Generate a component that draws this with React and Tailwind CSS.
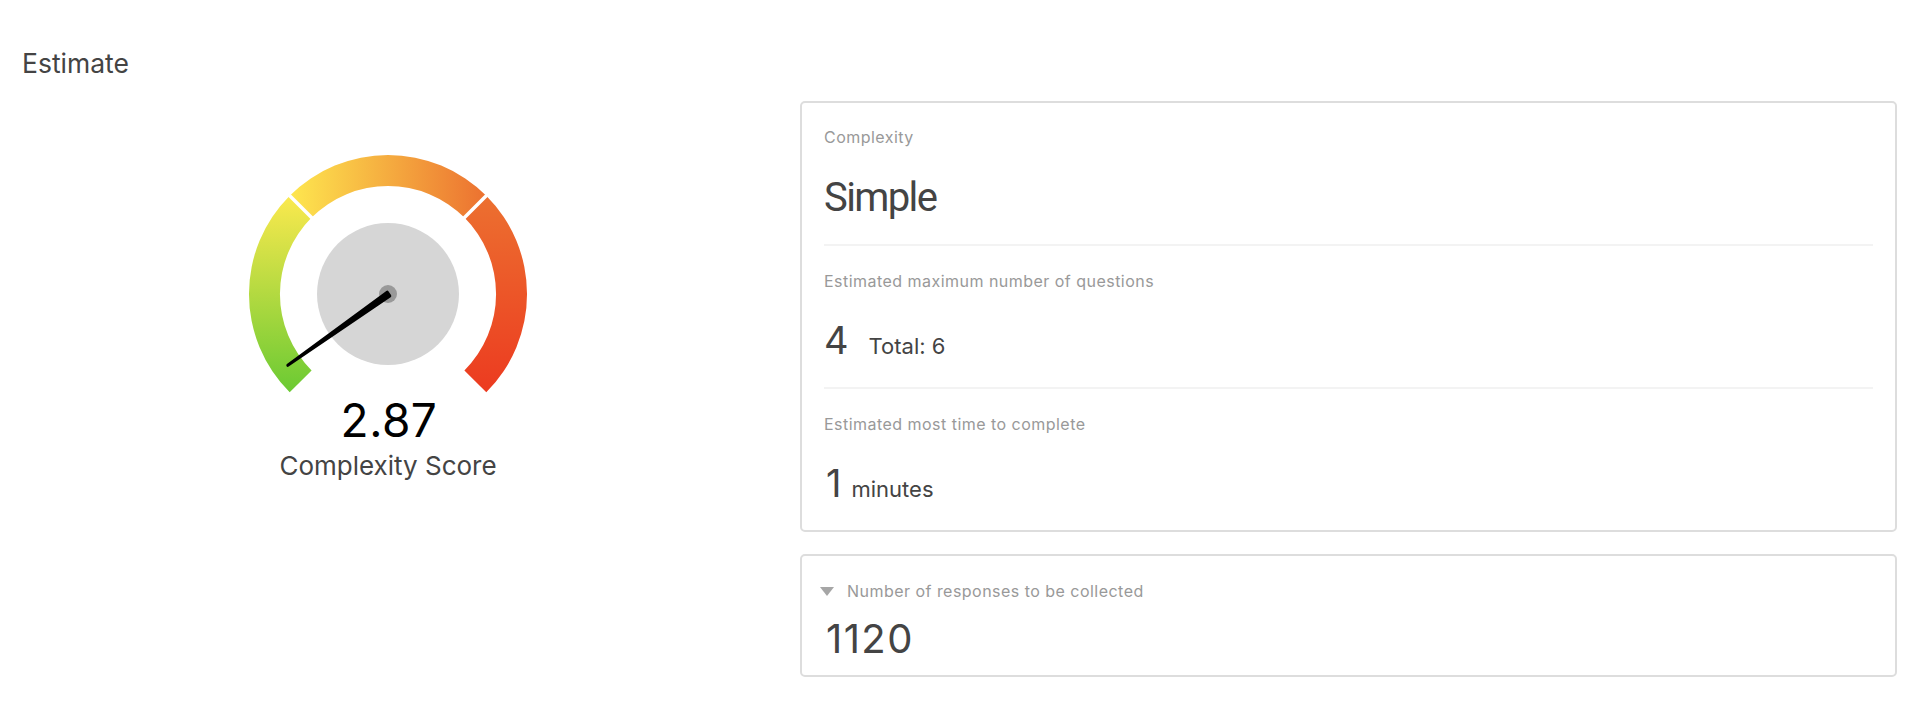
const Gauge = () => (
    <svg width="280" height="240" viewBox="0 0 280 240" className="block">
        <defs>
            <linearGradient id="seg-left" gradientUnits="userSpaceOnUse" x1="0" y1="42" x2="0" y2="238">
                <stop offset="0" stopColor="#fbe94e" />
                <stop offset="1" stopColor="#6bca33" />
            </linearGradient>
            <linearGradient id="seg-mid" gradientUnits="userSpaceOnUse" x1="42" y1="0" x2="238" y2="0">
                <stop offset="0" stopColor="#fee74f" />
                <stop offset="1" stopColor="#ec7130" />
            </linearGradient>
            <linearGradient id="seg-right" gradientUnits="userSpaceOnUse" x1="0" y1="42" x2="0" y2="238">
                <stop offset="0" stopColor="#ec7030" />
                <stop offset="1" stopColor="#ec3b20" />
            </linearGradient>
        </defs>
        <path d="M41.7 238.3A139 139 0 0 1 41.7 41.7L63.6 63.6A108 108 0 0 0 63.6 216.4Z" fill="url(#seg-left)" />
        <path d="M41.7 41.7A139 139 0 0 1 238.3 41.7L216.4 63.6A108 108 0 0 0 63.6 63.6Z" fill="url(#seg-mid)" />
        <path d="M238.3 41.7A139 139 0 0 1 238.3 238.3L216.4 216.4A108 108 0 0 0 216.4 63.6Z" fill="url(#seg-right)" />
        <path d="M38 38L68 68M242 38L212 68" stroke="#fff" strokeWidth="3.5" />
        <circle cx="140" cy="140" r="71" fill="#d6d6d6" />
        <circle cx="140" cy="140" r="9" fill="#999" />
        <path d="M39.8 211.3L139.2 138.1L141.8 141.9Z" fill="#000" stroke="#000" strokeWidth="3" strokeLinejoin="round" />
    </svg>
);

const Label = ({ children }) => (
    <div className="text-[16px] leading-5 text-[#999] tracking-[0.47px]">{children}</div>
);

const App = () => {
    return (
        <div className="h-[721px] bg-white font-['Inter','Liberation_Sans',sans-serif] text-[#444] overflow-hidden">
            <h1 className="pl-[22px] pt-[46px] text-[26.5px] leading-[34px] font-normal">Estimate</h1>
            <div className="flex mt-[21px]">
                {/* gauge */}
                <div className="w-[776px] shrink-0 flex flex-col items-center pt-[53px]">
                    <Gauge />
                    <div className="mt-[1px] pl-[2px] text-[46px] leading-[50px] text-black tracking-[0.5px]">2.87</div>
                    <div className="mt-[3px] text-[26px] leading-[36px]">Complexity Score</div>
                </div>
                {/* estimate cards */}
                <div className="ml-[24px] w-[1097px] flex flex-col gap-[22px]">
                    <div className="h-[431px] border-2 border-[#ddd] rounded-[5px] px-[22px]">
                        <div className="h-[143px] pt-[24px] border-b-2 border-[#f3f3f3]">
                            <Label>Complexity</Label>
                            <div className="mt-[27px] text-[40px] leading-[48px] tracking-[-1.6px] font-['Roboto',sans-serif]">Simple</div>
                        </div>
                        <div className="h-[143px] pt-[25px] border-b-2 border-[#f3f3f3]">
                            <Label>Estimated maximum number of questions</Label>
                            <div className="mt-[25px] flex items-baseline leading-[48px]">
                                <span className="text-[38px]">4</span>
                                <span className="ml-[20px] text-[22px]">Total: 6</span>
                            </div>
                        </div>
                        <div className="pt-[25px]">
                            <Label>Estimated most time to complete</Label>
                            <div className="mt-[25px] pl-[2px] flex items-baseline leading-[48px]">
                                <span className="text-[38px]">1</span>
                                <span className="ml-[10px] text-[22px]">minutes</span>
                            </div>
                        </div>
                    </div>
                    <div className="h-[123px] border-2 border-[#ddd] rounded-[5px] pl-[18px] pt-[25px]">
                        <div className="flex items-center">
                            <svg width="14" height="9" viewBox="0 0 14 9" className="mr-[13px]">
                                <path d="M0 0H14L7 9Z" fill="#a6a6a6" />
                            </svg>
                            <Label>Number of responses to be collected</Label>
                        </div>
                        <div className="pl-[6px] mt-[14px] text-[40px] leading-[48px] tracking-[1.4px]">1120</div>
                    </div>
                </div>
            </div>
        </div>
    );
};

export default App;
